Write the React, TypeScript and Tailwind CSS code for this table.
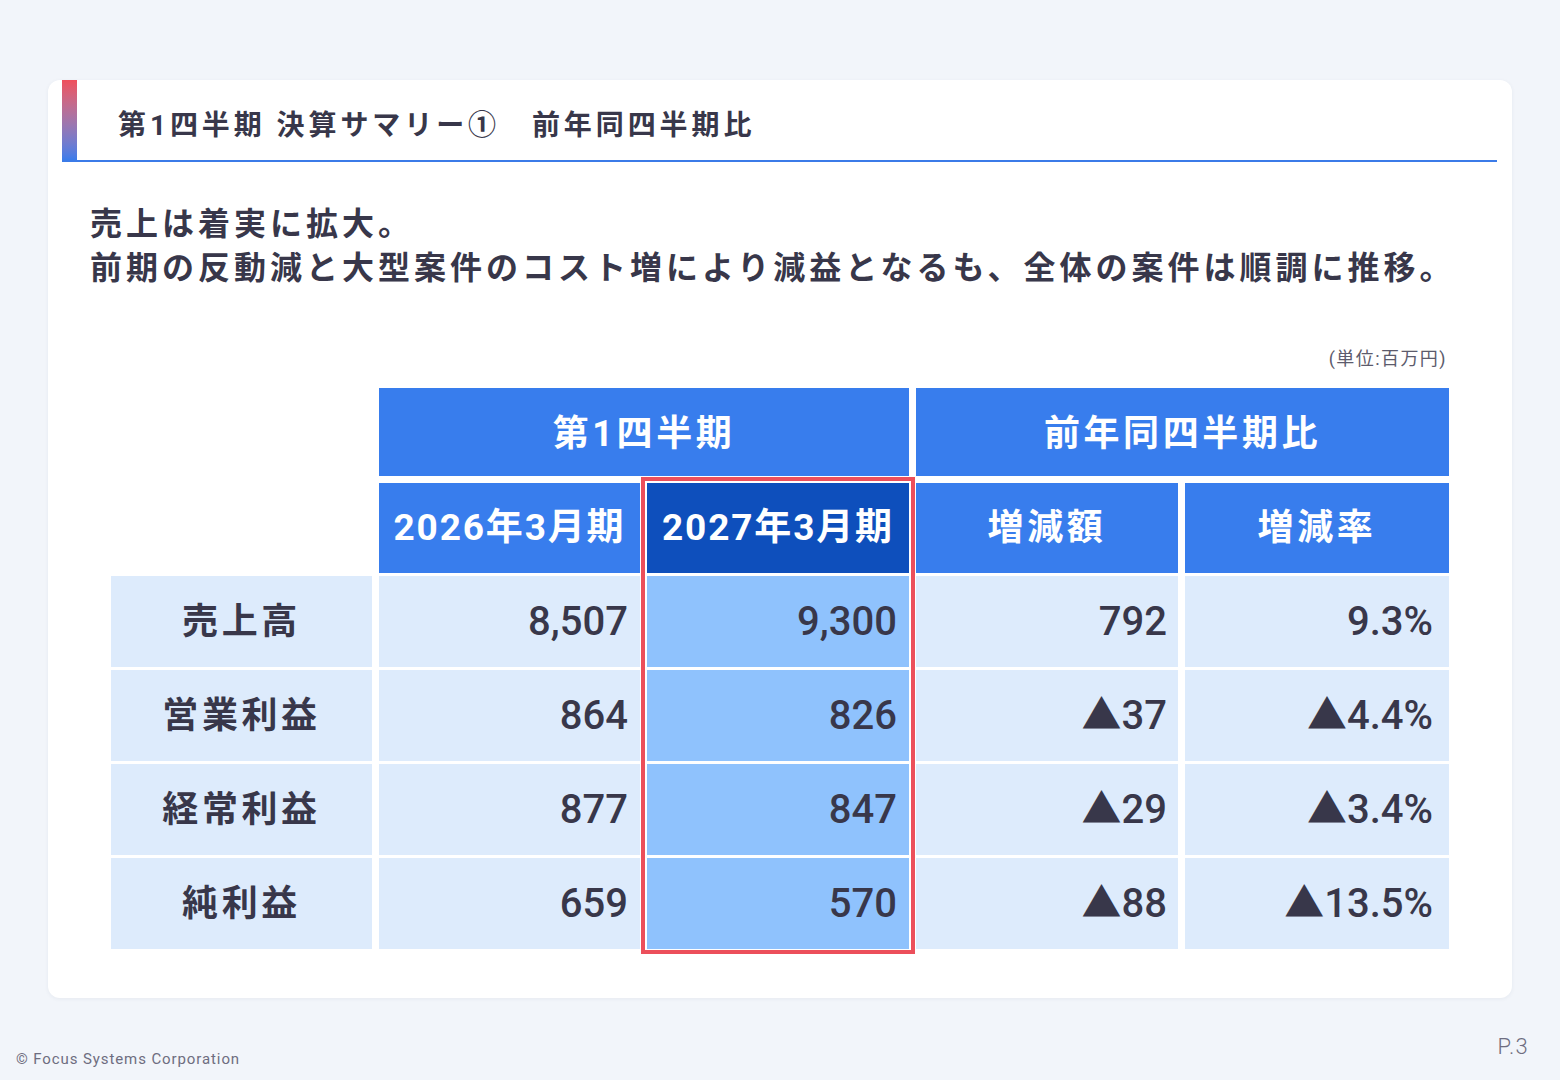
const rows = [
  { label: '売上高', prev: '8,507', cur: '9,300', diff: '792', rate: '9.3%' },
  { label: '営業利益', prev: '864', cur: '826', diff: '▲37', rate: '▲4.4%' },
  { label: '経常利益', prev: '877', cur: '847', diff: '▲29', rate: '▲3.4%' },
  { label: '純利益', prev: '659', cur: '570', diff: '▲88', rate: '▲13.5%' },
];

export default function App() {
  return (
    <div
      className="relative h-[1080px] w-[1560px] overflow-hidden bg-[#f2f5fa] pl-[48px] pt-[80px] text-[#38374a]"
      style={{ fontFamily: 'Roboto, "Noto Sans CJK JP", sans-serif' }}
    >
      {/* Card */}
      <div className="h-[918px] w-[1464px] rounded-[12px] bg-white pl-[14px] pr-[15px] shadow-[0_1px_4px_rgba(30,50,90,0.06)]">
        {/* Title */}
        <div className="flex h-[82px] items-stretch border-b-2 border-[#3b7be8]">
          <div className="w-[15px] bg-gradient-to-b from-[#ef4f5c] to-[#3a7cea]" />
          <h1 className="ml-[41px] flex items-center pt-[12px] text-[28px] font-bold tracking-[0.14em]">
            第1四半期 決算サマリー①　前年同四半期比
          </h1>
        </div>

        {/* Lead */}
        <p className="ml-[28px] mt-[40px] text-[32px] font-bold leading-[44px] tracking-[0.125em]">
          売上は着実に拡大。
          <br />
          前期の反動減と大型案件のコスト増により減益となるも、全体の案件は順調に推移。
        </p>

        <div className="mr-[50px] mt-[56px] text-right text-[18px] leading-[26px] tracking-[0.08em] text-[#5c5b6c]">
          (単位:百万円)
        </div>

        {/* Table */}
        <div className="relative ml-[49px] mt-[16px] grid w-[1338px] grid-cols-[261px_261px_262px_262px_264px] gap-x-[7px]">
          <div />
          <div className="col-span-2 flex h-[88px] items-center justify-center bg-[#387ded] pt-[4px] text-[36px] font-bold tracking-[0.1em] text-white">
            第1四半期
          </div>
          <div className="col-span-2 flex h-[88px] items-center justify-center bg-[#387ded] pt-[4px] text-[36px] font-bold tracking-[0.1em] text-white">
            前年同四半期比
          </div>

          <div className="mt-[7px]" />
          <div className="mt-[7px] flex h-[90px] items-center justify-center bg-[#387ded] text-[37px] font-bold tracking-[0.05em] text-white">
            2026年3月期
          </div>
          <div className="mt-[7px] flex h-[90px] items-center justify-center bg-[#0e4fbc] text-[37px] font-bold tracking-[0.05em] text-white">
            2027年3月期
          </div>
          <div className="mt-[7px] flex h-[90px] items-center justify-center bg-[#387ded] text-[36px] font-bold tracking-[0.1em] text-white">
            増減額
          </div>
          <div className="mt-[7px] flex h-[90px] items-center justify-center bg-[#387ded] text-[36px] font-bold tracking-[0.1em] text-white">
            増減率
          </div>

          {rows.map((r) => (
            <div key={r.label} className="contents">
              <div className="mt-[3px] flex h-[91px] items-center justify-center bg-[#ddebfc] text-[36px] font-bold tracking-[0.1em]">
                {r.label}
              </div>
              <div className="mt-[3px] flex h-[91px] items-center justify-end bg-[#ddebfc] pr-[12px] text-[40px] font-medium">
                {r.prev}
              </div>
              <div className="mt-[3px] flex h-[91px] items-center justify-end bg-[#8fc2fd] pr-[12px] text-[40px] font-medium">
                {r.cur}
              </div>
              <div className="mt-[3px] flex h-[91px] items-center justify-end bg-[#ddebfc] pr-[11px] text-[40px] font-medium">
                {r.diff}
              </div>
              <div className="mt-[3px] flex h-[91px] items-center justify-end bg-[#ddebfc] pr-[16px] text-[40px] font-medium">
                {r.rate}
              </div>
            </div>
          ))}

          {/* highlight frame */}
          <div className="pointer-events-none absolute left-[530px] top-[89px] h-[477px] w-[274px] border-[4px] border-[#ec4f5b]" />
        </div>
      </div>

      <div className="absolute bottom-[10px] left-[16px] text-[15px] tracking-[0.06em] text-[#6e6d80]">
        © Focus Systems Corporation
      </div>
      <div className="absolute bottom-[17px] right-[31px] text-[22px] font-light tracking-[0.06em] text-[#6e6d80]">P.3</div>
    </div>
  );
}
